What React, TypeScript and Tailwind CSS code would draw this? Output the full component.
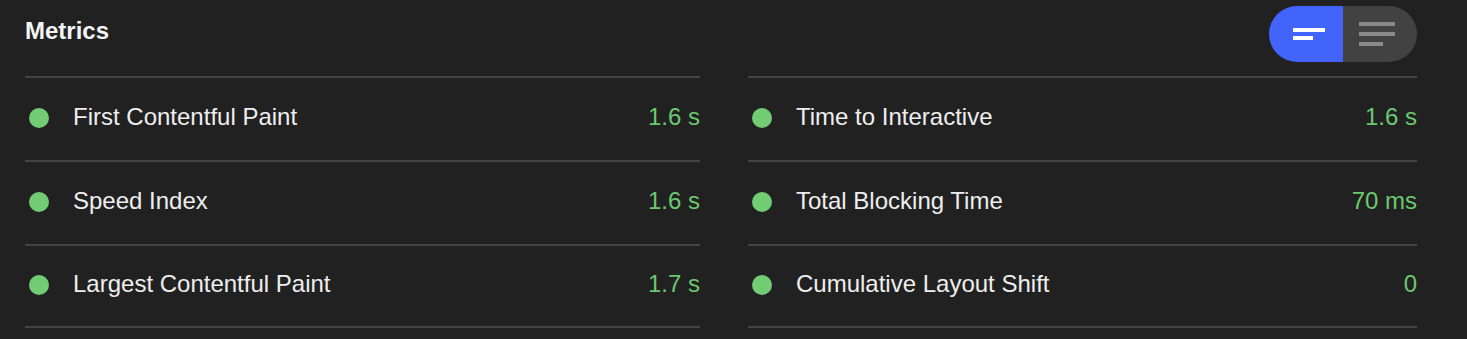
import React from "react";

type Metric = { label: string; value: string };

const left: Metric[] = [
  { label: "First Contentful Paint", value: "1.6 s" },
  { label: "Speed Index", value: "1.6 s" },
  { label: "Largest Contentful Paint", value: "1.7 s" },
];

const right: Metric[] = [
  { label: "Time to Interactive", value: "1.6 s" },
  { label: "Total Blocking Time", value: "70 ms" },
  { label: "Cumulative Layout Shift", value: "0" },
];

function MetricColumn({ items }: { items: Metric[] }) {
  return (
    <div className="flex flex-col border-b-2 border-[#444444]">
      {items.map((m, i) => (
        <div
          key={m.label}
          className={
            "flex items-center border-t-2 border-[#444444] pb-[2px] " +
            (i === items.length - 1 ? "h-[82px]" : "h-[84px]")
          }
        >
          <span className="ml-[4px] h-[20px] w-[20px] shrink-0 rounded-full bg-[#72cc74]" />
          <span className="mb-[2px] ml-[24px] flex-1 text-[24px] leading-[28px] text-[#eeeeee]">{m.label}</span>
          <span className="mb-[2px] text-[24px] leading-[28px] text-[#6cc870]">{m.value}</span>
        </div>
      ))}
    </div>
  );
}

function ViewToggle() {
  return (
    <div className="mt-[6px] flex h-[56px] w-[148px] overflow-hidden rounded-full">
      <button className="flex h-full w-[74px] flex-col justify-center bg-[#4264fb] pl-[24px]">
        <span className="block h-[4px] w-[32px] bg-white" />
        <span className="mt-[4px] block h-[4px] w-[20px] bg-white" />
      </button>
      <button className="flex h-full w-[74px] flex-col justify-center bg-[#424242] pl-[16px]">
        <span className="block h-[4px] w-[36px] bg-[#8a8a8a]" />
        <span className="mt-[6px] block h-[4px] w-[36px] bg-[#8a8a8a]" />
        <span className="mt-[6px] block h-[4px] w-[24px] bg-[#8a8a8a]" />
      </button>
    </div>
  );
}

export default function App() {
  return (
    <div
      className="h-[339px] w-full overflow-hidden bg-[#212121] pl-[25px] pr-[50px]"
      style={{ fontFamily: '"Liberation Sans", Arial, sans-serif' }}
    >
      <div className="flex h-[76px] items-start justify-between">
        <h2 className="mt-[18px] text-[24px] font-bold leading-[26px] text-[#f5f5f5]">Metrics</h2>
        <ViewToggle />
      </div>
      <div className="grid grid-cols-[675px_669px] gap-x-[48px]">
        <MetricColumn items={left} />
        <MetricColumn items={right} />
      </div>
    </div>
  );
}
